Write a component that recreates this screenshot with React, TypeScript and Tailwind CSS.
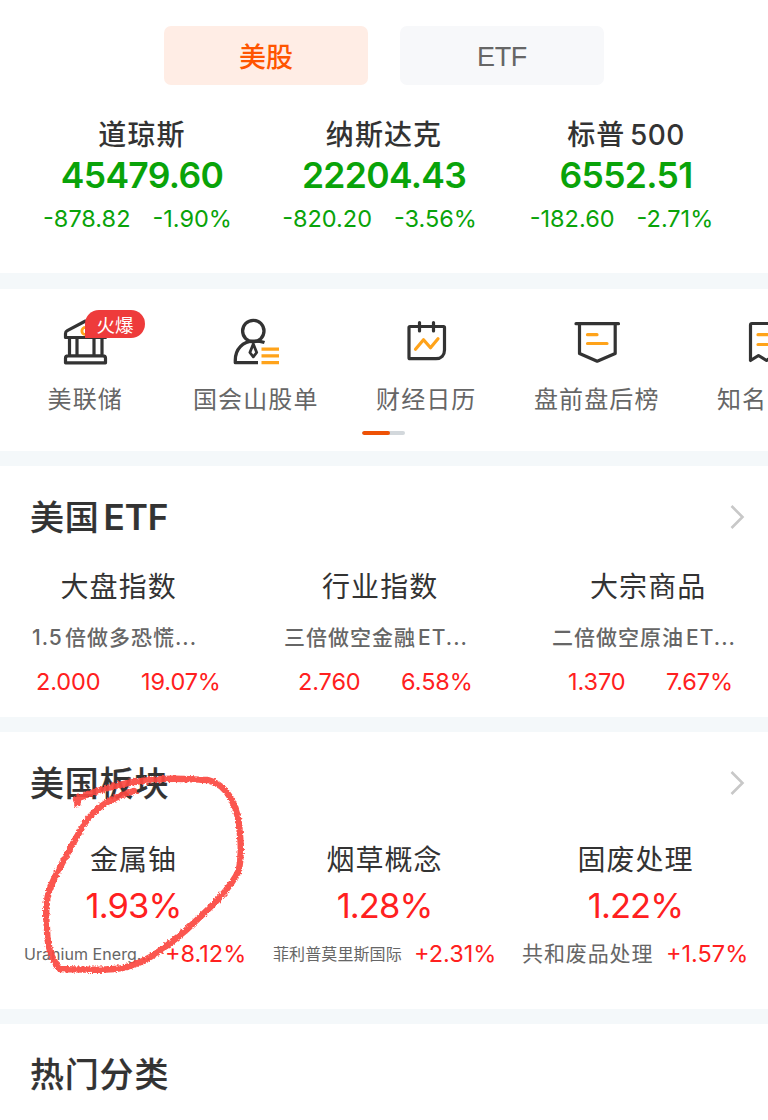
import React from "react";

const FONT = "font-['Inter','Noto_Sans_CJK_SC',sans-serif]";

type Index = { name: React.ReactNode; price: string; diff: string; pct: string };

const indices: Index[] = [
  { name: "道琼斯", price: "45479.60", diff: "-878.82", pct: "-1.90%" },
  { name: "纳斯达克", price: "22204.43", diff: "-820.20", pct: "-3.56%" },
  { name: <>标普 <span className="tracking-[0.5px]">500</span></>, price: "6552.51", diff: "-182.60", pct: "-2.71%" },
];

const etfs = [
  { cell: "w-[253px]", name: "大盘指数", nameAt: "pl-[60.5px]", fund: "1.5 倍做多恐慌...", fundAt: "pl-[32px]", price: "2.000", pct: "19.07%", numAt: "pl-[36px]" },
  { cell: "w-[267px]", name: "行业指数", nameAt: "pl-[69px]", fund: "三倍做空金融 ET...", fundAt: "pl-[31px]", price: "2.760", pct: "6.58%", numAt: "pl-[45px]" },
  { cell: "w-[248px]", name: "大宗商品", nameAt: "pl-[70px]", fund: "二倍做空原油 ET...", fundAt: "pl-[32px]", price: "1.370", pct: "7.67%", numAt: "pl-[48px]" },
];

const sectors = [
  { name: "金属铀", pct: "1.93%", stock: "Uranium Energ...", size: "text-[16px] tracking-[0.05px]", change: "+8.12%", foot: "pl-[16px]" },
  { name: "烟草概念", pct: "1.28%", stock: "菲利普莫里斯国际", size: "text-[16px] tracking-[0.1px]", change: "+2.31%", foot: "pl-[14px]" },
  { name: "固废处理", pct: "1.22%", stock: "共和废品处理", size: "text-[21px] tracking-[0.9px]", change: "+1.57%", foot: "pl-[12px]" },
];

function BankIcon() {
  return (
    <svg width="50" height="50" viewBox="60 316 50 50" fill="none" stroke="#333" strokeWidth="3.2" strokeLinejoin="round">
      <path d="M65.500 337.500v-4c0-1.400.6-2.300 1.800-2.900l18.200-9.600 18.200 9.600c1.200.6 1.800 1.500 1.800 2.900v4z" />
      <circle cx="85.500" cy="331" r="3.600" stroke="#ffa31a" strokeWidth="2.800" />
      <path d="M69.500 338v17M77 338v17M94 338v17M102 338v17M68 355.800h35c1.500 0 2.500 1 2.500 2.500v4.500H65.500v-4.500c0-1.500 1-2.500 2.500-2.500z" />
    </svg>
  );
}

function PersonIcon() {
  return (
    <svg width="50" height="50" viewBox="231 316 50 50" fill="none" stroke="#333" strokeWidth="3.300">
      <circle cx="253.300" cy="331" r="10.700" />
      <path d="M264.500 342.500c-3-1-6.500-1.300-10.500-1.300-11.500 0-18.700 8-18.700 19v2.500h22.700" strokeLinejoin="round" />
      <path d="M253.300 344l-3.400 8.500 3.400 4.300 3.400-4.300z" strokeWidth="2.800" strokeLinejoin="round" />
      <path d="M261.500 349.200H279M261.500 355.800H279M261.500 362.700H279" stroke="#ffa31a" strokeWidth="3.200" />
    </svg>
  );
}

function CalendarIcon() {
  return (
    <svg width="50" height="50" viewBox="401 316 50 50" fill="none" stroke="#333" strokeWidth="3.200" strokeLinecap="round" strokeLinejoin="round">
      <path d="M409 327.500c0-.7.300-1 1-1h33.500c.7 0 1 .3 1 1V350c0 5.500-3.300 8.700-8.500 8.700h-26c-.7 0-1-.3-1-1z" />
      <path d="M419.500 322.500v8.500M433.500 322.500v8.500" />
      <path d="M415.500 349.200l8-9.500 7 8 7.500-9" stroke="#ffa31a" />
    </svg>
  );
}

function PennantIcon() {
  return (
    <svg width="50" height="50" viewBox="572 316 50 50" fill="none" stroke="#333" strokeWidth="3.200" strokeLinecap="round" strokeLinejoin="round">
      <path d="M576 323.700h42.500M579.500 324v29.500l17.700 7.700 18-7.700v-29.500" />
      <path d="M587.500 334.700h9.500M587.500 343.500H607" stroke="#ffa31a" />
    </svg>
  );
}

function RibbonIcon() {
  return (
    <svg width="50" height="50" viewBox="742 316 50 50" fill="none" stroke="#333" strokeWidth="3.200" strokeLinecap="round" strokeLinejoin="round">
      <path d="M751.500 325c0-1 .5-1.500 1.500-1.500h28c1 0 1.500.5 1.500 1.500v35.500l-7.500-5-7.500 5-8-5-8 5z" />
      <path d="M759 334.700h10M759 344.500h18" stroke="#ffa31a" />
    </svg>
  );
}

const shortcuts = [
  { label: "美联储", icon: <BankIcon />, hot: true },
  { label: "国会山股单", icon: <PersonIcon /> },
  { label: "财经日历", icon: <CalendarIcon /> },
  { label: "盘前盘后榜", icon: <PennantIcon /> },
];

function Divider() {
  return <div className="h-[15px] shrink-0 bg-[#f4f8fa]" />;
}

function SectionTitle({ children, more = true }: { children: React.ReactNode; more?: boolean }) {
  return (
    <div className="flex h-[50px] items-center justify-between pr-[23px] pl-[30px]">
      <h2 className="pt-px text-[34px] leading-[50px] font-medium tracking-[0.8px] text-[#333] [-webkit-text-stroke:0.2px_#333]">{children}</h2>
      {more && (
        <svg width="16" height="26" viewBox="0 0 16 26" fill="none" stroke="#c8c8c8" strokeWidth="2.600">
          <path d="M2.500 2L13.500 13L2.500 24" />
        </svg>
      )}
    </div>
  );
}

function Scribble() {
  const loop =
    "M78 806L76 799C98 790 122 782 152 780C176 777 194 780 208 780C228 785 239 807 240 835C242 852 240 864 239 870C230 890 210 908 185 931C164 948 143 967 115 969C93 971 73 969 60 969C50 958 47 945 47 928C45 909 47 895 51 886C57 870 73 844 84 824C98 805 111 798 137 790";
  return (
    <svg className="pointer-events-none absolute top-0 left-0" width="768" height="1120" viewBox="0 0 768 1120" fill="none">
      <filter id="chalk" x="0" y="0" width="1" height="1" filterUnits="objectBoundingBox">
        <feTurbulence type="fractalNoise" baseFrequency="0.45" numOctaves="2" seed="4" result="n" />
        <feDisplacementMap in="SourceGraphic" in2="n" scale="4" xChannelSelector="R" yChannelSelector="G" />
        <feGaussianBlur stdDeviation="0.4" />
      </filter>
      <g filter="url(#chalk)" stroke="#fb4640" strokeLinejoin="round" strokeOpacity="0.92">
        <rect x="0" y="0" width="768" height="1120" stroke="none" />
        <path d={loop} strokeWidth="6.400" />
      </g>
    </svg>
  );
}

export default function App() {
  return (
    <main className={`relative flex h-[1120px] w-[768px] flex-col overflow-hidden bg-white text-[#333] ${FONT}`}>
      <section className="h-[273px] shrink-0 pt-[26px]">
        <div className="flex justify-center gap-8">
          <button className="h-[59px] w-[204px] rounded-[7px] bg-[#ffede5] pt-[5px] text-[27px] font-medium text-[#ff5500]">美股</button>
          <button className="h-[59px] w-[204px] rounded-[7px] bg-[#f7f8fa] pt-[3px] font-['Liberation_Sans',sans-serif] text-[27px] tracking-[-0.3px] text-[#666]">ETF</button>
        </div>
        <div className="flex pt-[30px] pl-[21px]">
          {indices.map((i) => (
            <div key={i.price} className="flex w-[242px] flex-col items-center whitespace-nowrap">
              <div className="h-[40px] text-[28px] leading-[40px] font-medium tracking-[1.1px] [word-spacing:-4px]">{i.name}</div>
              <div className="h-[41px] text-[35.500px] leading-[41px] font-semibold tracking-[-0.7px] text-[#09a309]">{i.price}</div>
              <div className="flex h-[46px] gap-[22px] pr-[9px] text-[23.500px] leading-[46px] text-[#09a309]">
                <span>{i.diff}</span>
                <span>{i.pct}</span>
              </div>
            </div>
          ))}
        </div>
      </section>
      <div className="h-4 shrink-0 bg-[#f4f8fa]" />
      <section className="h-[162px] shrink-0 overflow-hidden pt-[27px]">
        <div className="flex">
          {shortcuts.map((s) => (
            <div key={s.label} className="relative flex w-[170.500px] shrink-0 flex-col items-center">
              {s.icon}
              {s.hot && (
                <span className="absolute top-[-6px] left-[85px] h-[28px] w-[60px] rounded-[14px] rounded-bl-none bg-[#ee3b3b] pt-px text-center text-[18.500px] leading-[28px] text-white">火爆</span>
              )}
              <span className="mt-[14px] text-[24px] leading-[40px] tracking-[1.1px] whitespace-nowrap text-[#666]">{s.label}</span>
            </div>
          ))}
          <div className="w-[86px] shrink-0 overflow-hidden pl-[35px]">
            <div className="w-[75px] pl-[24px]"><RibbonIcon /></div>
            <div className="mt-[14px] text-[24px] leading-[40px] tracking-[1.1px] whitespace-nowrap text-[#666]">知名</div>
          </div>
        </div>
        <div className="ml-[362px] mt-[11px] h-1 w-[43px] overflow-hidden rounded-full bg-[#d3d8dc]">
          <div className="h-1 w-7 rounded-full bg-[#ee5206]" />
        </div>
      </section>
      <Divider />
      <section className="h-[251px] shrink-0 pt-[26px]">
        <SectionTitle>美国 <span className="-ml-[6px] text-[35px] font-semibold tracking-[0px]">ETF</span></SectionTitle>
        <div className="flex pt-[19px] whitespace-nowrap">
          {etfs.map((e) => (
            <div key={e.name} className={e.cell}>
              <div className={`${e.nameAt} pt-px text-[28px] leading-[50px] tracking-[1.1px]`}>{e.name}</div>
              <div className={`${e.fundAt} text-[21px] leading-[52px] font-medium tracking-[1px] text-[#666] [word-spacing:-4.5px]`}>{e.fund}</div>
              <div className={`${e.numAt} -mt-px flex gap-[40.500px] text-[23.500px] leading-[38px] tracking-[-0.1px] text-[#ff2020]`}>
                <span>{e.price}</span>
                <span>{e.pct}</span>
              </div>
            </div>
          ))}
        </div>
      </section>
      <Divider />
      <section className="h-[277px] shrink-0 pt-[26px]">
        <SectionTitle>美国板块</SectionTitle>
        <div className="flex pt-[26px] pl-[8px] whitespace-nowrap">
          {sectors.map((s) => (
            <div key={s.name} className="w-[251px] shrink-0">
              <div className="h-[50px] pt-px text-center text-[28px] leading-[50px] tracking-[1px]">{s.name}</div>
              <div className="text-center text-[34.500px] leading-[44px] tracking-[-0.9px] text-[#ff2020]">{s.pct}</div>
              <div className={`flex h-[52px] items-center ${s.foot}`}>
                <span className={`shrink-0 ${s.name === "固废处理" ? "w-[144px]" : "w-[141px]"} text-[#666] ${s.size}`}>{s.stock}</span>
                <span className="text-[23.500px] text-[#ff2020]">{s.change}</span>
              </div>
            </div>
          ))}
        </div>
      </section>
      <Divider />
      <section className="pt-[25px]">
        <SectionTitle more={false}>热门分类</SectionTitle>
      </section>
      <Scribble />
    </main>
  );
}
